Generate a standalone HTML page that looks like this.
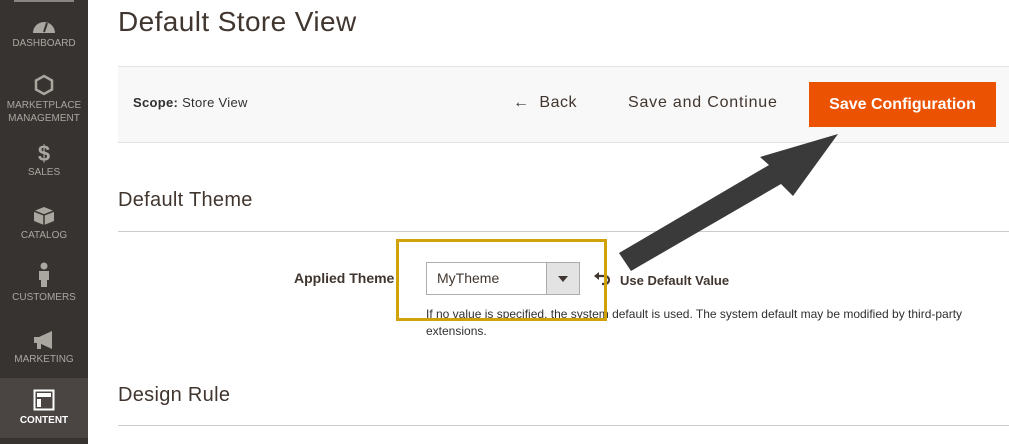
<!DOCTYPE html>
<html><head><meta charset="utf-8"><style>
*{margin:0;padding:0;box-sizing:border-box}
body{width:1009px;height:444px;overflow:hidden;background:#fff;font-family:"Liberation Sans",sans-serif;position:relative;color:#303030}
.sb{position:absolute;left:0;top:0;width:88px;height:444px;background:#373330}
.it{position:absolute;left:0;width:88px;text-align:center;color:#aaa6a0;font-size:10px;line-height:13px}
.ic{display:block;margin:0 auto 3px}
.abs{position:absolute}
</style></head><body>
<div class="sb">
<div class="abs" style="left:14px;top:0;width:60px;height:2px;background:#8a8580"></div>
<div class="it" style="top:16px"><svg class="ic" width="24" height="18" viewBox="0 0 24 18"><path d="M1 17A11 11 0 0 1 23 17Z" fill="#aaa6a0"/><path d="M12 16L15 7" stroke="#373330" stroke-width="2"/></svg>DASHBOARD</div>
<div class="it" style="top:74px"><svg class="ic" width="20" height="22" viewBox="0 0 20 22"><path d="M10 2L18 6.5V15.5L10 20L2 15.5V6.5Z" fill="none" stroke="#aaa6a0" stroke-width="2.5"/></svg>MARKETPLACE<br>MANAGEMENT</div>
<div class="it" style="top:142px"><div style="font-size:22px;font-weight:bold;line-height:24px">$</div>SALES</div>
<div class="it" style="top:206px"><svg class="ic" width="22" height="20" viewBox="0 0 22 20"><path d="M11 1L21 5V15L11 19L1 15V5Z" fill="#aaa6a0"/><path d="M1 5L11 9L21 5M11 9V19" stroke="#373330" stroke-width="1.5" fill="none"/></svg>CATALOG</div>
<div class="it" style="top:262px"><svg class="ic" width="14" height="26" viewBox="0 0 14 26"><circle cx="7" cy="4" r="3.5" fill="#aaa6a0"/><path d="M2 9H12V18H10V25H4V18H2Z" fill="#aaa6a0"/></svg>CUSTOMERS</div>
<div class="it" style="top:330px"><svg class="ic" width="24" height="20" viewBox="0 0 24 20"><path d="M2 7H7L20 1V19L7 13H2Z" fill="#aaa6a0"/><rect x="5" y="13" width="4" height="6" fill="#aaa6a0"/></svg>MARKETING</div>
<div class="abs" style="left:0;top:378px;width:88px;height:60px;background:#4a4542"></div>
<div class="it" style="top:389px;color:#fff;font-weight:bold"><svg class="ic" width="22" height="22" viewBox="0 0 22 22"><rect x="1.5" y="1.5" width="19" height="19" fill="none" stroke="#fff" stroke-width="2"/><rect x="4" y="4" width="14" height="4" fill="#fff"/><rect x="4" y="10" width="4" height="8" fill="#fff"/></svg>CONTENT</div>
</div>
<div class="abs" style="left:118px;top:6px;font-size:28px;color:#41362f;letter-spacing:0.4px">Default Store View</div>
<div class="abs" style="left:118px;top:66px;width:891px;height:77px;background:#f8f8f8;border-top:1px solid #e3e3e3;border-bottom:1px solid #e3e3e3"></div>
<div class="abs" style="left:133px;top:95px;font-size:13px;letter-spacing:0.3px"><b>Scope:</b> Store View</div>
<div class="abs" style="left:513px;top:94px;font-size:16px;color:#41362f;letter-spacing:0.5px">&#8592;&nbsp; Back</div>
<div class="abs" style="left:628px;top:94px;font-size:16px;color:#41362f;letter-spacing:0.8px">Save and Continue</div>
<div class="abs" style="left:809px;top:82px;width:187px;height:45px;background:#eb5202;color:#fff;font-size:16px;font-weight:bold;line-height:45px;text-align:center">Save Configuration</div>
<div class="abs" style="left:118px;top:189px;font-size:20px;color:#41362f;letter-spacing:0.3px">Default Theme</div>
<div class="abs" style="left:118px;top:231px;width:891px;height:1px;background:#ccc"></div>
<div class="abs" style="left:294px;top:270px;font-size:14px;font-weight:bold;color:#41362f">Applied Theme</div>
<div class="abs" style="left:426px;top:262px;width:154px;height:33px;border:1px solid #adadad;background:#fff"></div>
<div class="abs" style="left:546px;top:263px;width:33px;height:31px;background:#e3e3e3;border-left:1px solid #adadad"></div>
<div class="abs" style="left:558px;top:276px;width:0;height:0;border-left:5px solid transparent;border-right:5px solid transparent;border-top:6px solid #41362f"></div>
<div class="abs" style="left:437px;top:270px;font-size:14px;color:#41362f">MyTheme</div>
<svg class="abs" style="left:593px;top:271px" width="20" height="16" viewBox="0 0 20 16"><path d="M1 5L6 1V9Z" fill="#41362f"/><path d="M5 5H12A4 4 0 0 1 12 13H9" fill="none" stroke="#41362f" stroke-width="2.2"/></svg>
<div class="abs" style="left:620px;top:273px;font-size:13px;font-weight:bold;color:#41362f">Use Default Value</div>
<div class="abs" style="left:426px;top:306px;font-size:12px;line-height:17px;color:#303030;width:580px">If no value is specified, the system default is used. The system default may be modified by third-party extensions.</div>
<div class="abs" style="left:396px;top:239px;width:211px;height:82px;border:3px solid #cfa20a"></div>
<svg class="abs" style="left:0;top:0" width="1009" height="444"><polygon points="619,253 769,165 760,157 838,134 793,196 781,184 631,271" fill="#3a3a3a"/></svg>
<div class="abs" style="left:118px;top:384px;font-size:20px;color:#41362f;letter-spacing:0.3px">Design Rule</div>
<div class="abs" style="left:118px;top:425px;width:891px;height:1px;background:#ccc"></div>
</body></html>
